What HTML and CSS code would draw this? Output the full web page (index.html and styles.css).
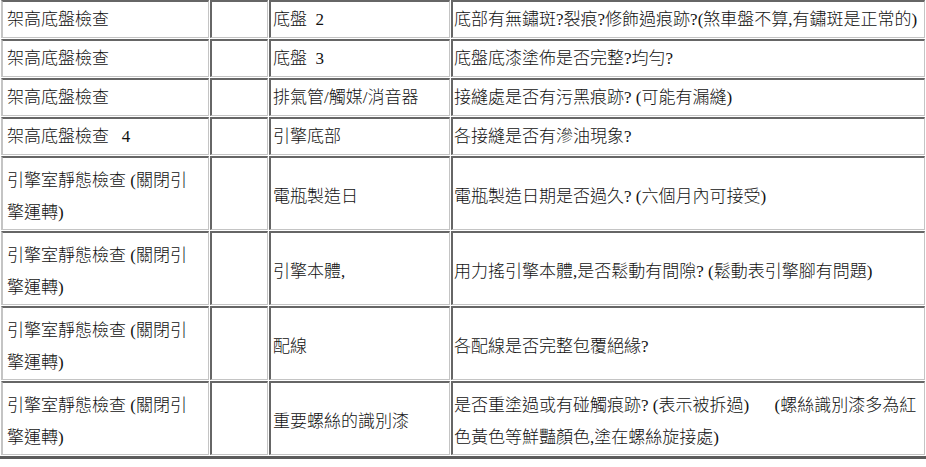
FILE: index.html
```html
<!DOCTYPE html>
<html lang="zh-Hant">
<head>
<meta charset="utf-8">
<title>檢查表</title>
<link rel="stylesheet" href="styles.css">
</head>
<body>
<table class="sheet">
  <tr class="one">
    <td class="c1">架高底盤檢查</td>
    <td class="c2"></td>
    <td class="c3">底盤&nbsp;&nbsp;2</td>
    <td class="c4">底部有無鏽斑?裂痕?修飾過痕跡?(煞車盤不算,有鏽斑是正常的)</td>
  </tr>
  <tr class="one">
    <td class="c1">架高底盤檢查</td>
    <td class="c2"></td>
    <td class="c3">底盤&nbsp;&nbsp;3</td>
    <td class="c4">底盤底漆塗佈是否完整?均勻?</td>
  </tr>
  <tr class="one">
    <td class="c1">架高底盤檢查</td>
    <td class="c2"></td>
    <td class="c3">排氣管/觸媒/消音器</td>
    <td class="c4">接縫處是否有污黑痕跡? (可能有漏縫)</td>
  </tr>
  <tr class="one">
    <td class="c1">架高底盤檢查&nbsp;&nbsp;&nbsp;4</td>
    <td class="c2"></td>
    <td class="c3">引擎底部</td>
    <td class="c4">各接縫是否有滲油現象?</td>
  </tr>
  <tr class="two">
    <td class="c1">引擎室靜態檢查&nbsp;(關閉引擎運轉)</td>
    <td class="c2"></td>
    <td class="c3">電瓶製造日</td>
    <td class="c4">電瓶製造日期是否過久? (六個月內可接受)</td>
  </tr>
  <tr class="two">
    <td class="c1">引擎室靜態檢查&nbsp;(關閉引擎運轉)</td>
    <td class="c2"></td>
    <td class="c3">引擎本體,</td>
    <td class="c4">用力搖引擎本體,是否鬆動有間隙? (鬆動表引擎腳有問題)</td>
  </tr>
  <tr class="two">
    <td class="c1">引擎室靜態檢查&nbsp;(關閉引擎運轉)</td>
    <td class="c2"></td>
    <td class="c3">配線</td>
    <td class="c4">各配線是否完整包覆絕緣?</td>
  </tr>
  <tr class="two">
    <td class="c1">引擎室靜態檢查&nbsp;(關閉引擎運轉)</td>
    <td class="c2"></td>
    <td class="c3">重要螺絲的識別漆</td>
    <td class="c4">是否重塗過或有碰觸痕跡? (表示被拆過)&nbsp;&nbsp;&nbsp;&nbsp;&nbsp; (螺絲識別漆多為紅色黃色等鮮豔顏色,塗在螺絲旋接處)</td>
  </tr>
</table>
</body>
</html>
```

FILE: styles.css
```css
html, body {
  margin: 0;
  padding: 0;
  background: #ffffff;
}

.sheet {
  width: 926px;
  margin-top: -1px;
  table-layout: fixed;
  border-collapse: separate;
  border-spacing: 1px;
  border-bottom: 3px solid #5c5c5c;
  font-family: "Liberation Serif", "Noto Sans CJK TC", serif;
  font-size: 17px;
  font-weight: 300;
  line-height: 32px;
  color: #111111;
}

.sheet td {
  box-sizing: border-box;
  border-top: 2px solid #666666;
  border-left: 2px solid #666666;
  border-right: 1px solid #c4c4c4;
  border-bottom: 1px solid #c4c4c4;
  padding: 0 2px 0 2px;
  vertical-align: middle;
  white-space: normal;
}

.sheet td.c1 {
  width: 208px;
  border-left-color: #c4c4c4;
  padding-left: 4px;
  padding-right: 12px;
}

.sheet td.c2 {
  width: 58px;
}

.sheet td.c3 {
  width: 181px;
  padding-left: 2px;
}

.sheet td.c4 {
  width: 474px;
  padding-left: 1px;
  padding-right: 1px;
}

.sheet tr.one {
  height: 38px;
}

.sheet tr.two {
  height: 74px;
}

.sheet tr.two td {
  padding-top: 6px;
}
```
